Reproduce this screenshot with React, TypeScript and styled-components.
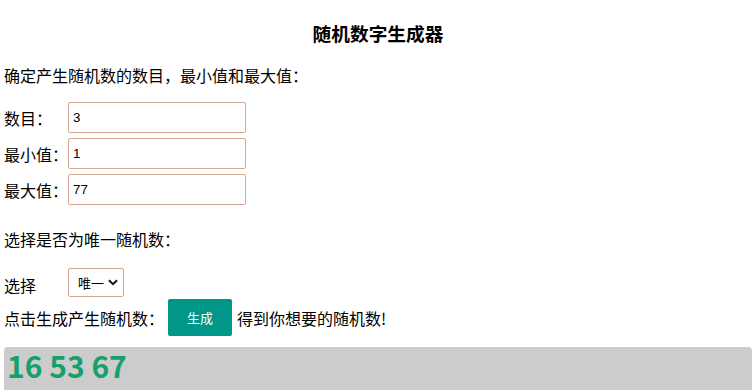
import styled, { createGlobalStyle } from 'styled-components';

/* ── Styles ── */

const Global = createGlobalStyle`
    body {
        margin: 0;
        background: #fff;
        font-family: "Noto Sans CJK SC", "Noto Sans", sans-serif;
        color: #000;
    }
`;

const Page = styled.div`
    padding: 0 4px;
    font-size: 16px;
`;

const Title = styled.h3`
    margin: 0;
    padding-top: 19px;
    height: 30px;
    text-align: center;
    font-size: 18.7px;
    font-weight: 700;
    line-height: 28px;
`;

const Para = styled.p<{ $top: number }>`
    margin: ${p => p.$top}px 0 0;
    line-height: 24px;
`;

const Fields = styled.div`
    display: flex;
    flex-direction: column;
    gap: 5px;
    margin-top: 15px;
`;

const Row = styled.div<{ $top?: number }>`
    display: flex;
    align-items: center;
    margin-top: ${p => p.$top ?? 0}px;
`;

const Label = styled.span<{ $shift?: number }>`
    width: 64px;
    flex-shrink: 0;
    line-height: 24px;
    padding-top: ${p => p.$shift ?? 0}px;
`;

const Input = styled.input`
    box-sizing: border-box;
    width: 178px;
    height: 31px;
    border: 1px solid #d6a995;
    border-radius: 2px;
    padding: 0 4px;
    font-family: "Liberation Sans", Arial, sans-serif;
    font-size: 13.33px;
    color: #000;
    outline: none;
`;

const SelectWrap = styled.div`
    position: relative;
    width: 56px;
    height: 29px;
`;

const Select = styled.select`
    box-sizing: border-box;
    width: 100%;
    height: 100%;
    appearance: none;
    -webkit-appearance: none;
    background: #fff;
    border: 1px solid #d6a995;
    border-radius: 2px;
    padding: 0 0 0 9px;
    font-family: "Noto Sans CJK SC", sans-serif;
    font-size: 13px;
    color: #000;
    outline: none;
`;

const Chevron = styled.svg`
    position: absolute;
    right: 6px;
    top: 11px;
    pointer-events: none;
`;

const ActionRow = styled.div`
    display: flex;
    align-items: center;
    margin-top: 2px;
`;

const Button = styled.button`
    width: 64px;
    height: 37px;
    margin: 0 5px 0 4px;
    border: none;
    border-radius: 2px;
    background: #009688;
    color: #fff;
    font-family: "Noto Sans CJK SC", sans-serif;
    font-size: 13px;
    cursor: pointer;
`;

const Result = styled.div`
    margin-top: 11px;
    height: 46px;
    background: #cccccc;
    border-radius: 4px;
    padding: 0 3px;
    font-size: 30px;
    font-weight: 700;
    line-height: 36px;
    color: #18a06c;
`;

/* ── Component ── */

export default function App() {
    return (
        <Page>
            <Global />
            <Title>随机数字生成器</Title>
            <Para $top={14}>确定产生随机数的数目，最小值和最大值：</Para>
            <Fields>
                <Row>
                    <Label>数目：</Label>
                    <Input defaultValue="3" />
                </Row>
                <Row>
                    <Label>最小值：</Label>
                    <Input defaultValue="1" />
                </Row>
                <Row>
                    <Label>最大值：</Label>
                    <Input defaultValue="77" />
                </Row>
            </Fields>
            <Para $top={22}>选择是否为唯一随机数：</Para>
            <Row $top={17}>
                <Label $shift={4}>选择</Label>
                <SelectWrap>
                    <Select defaultValue="unique">
                        <option value="unique">唯一</option>
                        <option value="any">不唯一</option>
                    </Select>
                    <Chevron width="10" height="7" viewBox="0 0 10 7">
                        <path d="M1 1.2 L5 5.2 L9 1.2" fill="none" stroke="#111" strokeWidth="2" />
                    </Chevron>
                </SelectWrap>
            </Row>
            <ActionRow>
                <span>点击生成产生随机数：</span>
                <Button>生成</Button>
                <span>得到你想要的随机数!</span>
            </ActionRow>
            <Result>16 53 67</Result>
        </Page>
    );
}
